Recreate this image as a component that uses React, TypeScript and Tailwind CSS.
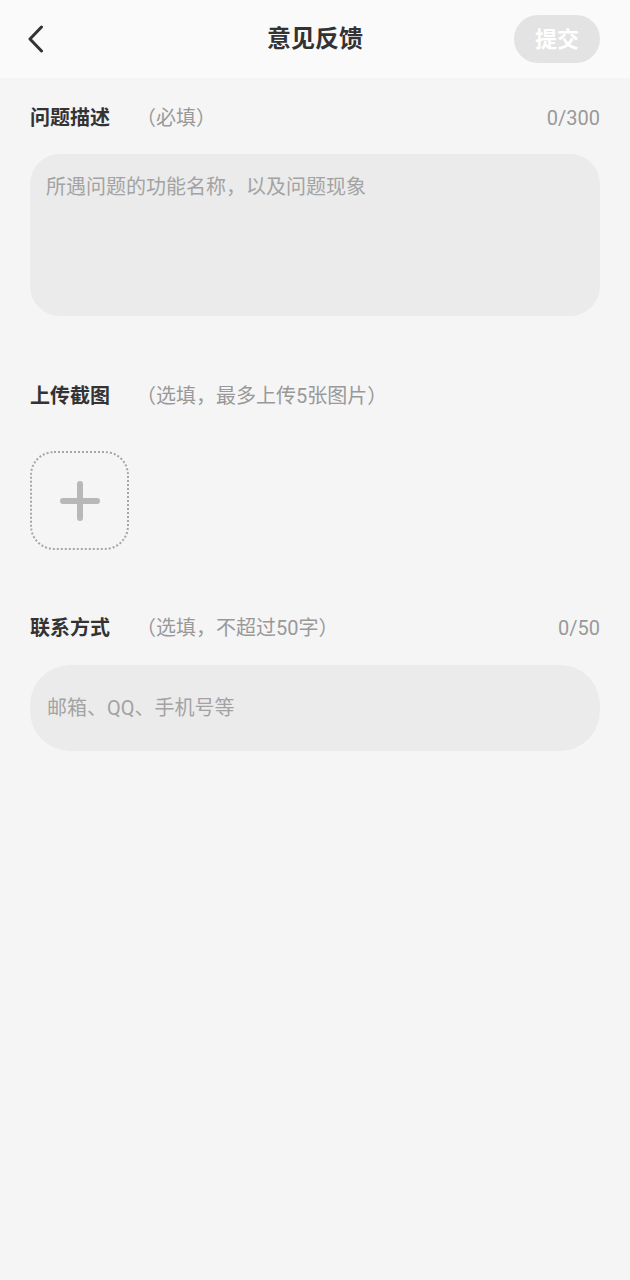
import * as React from "react";

const font = "font-['Roboto','Noto_Sans_CJK_SC',sans-serif]";

export default function App() {
  const [desc, setDesc] = React.useState("");
  const [contact, setContact] = React.useState("");

  return (
    <main className={`min-h-[1280px] bg-[#f5f5f5] ${font}`}>
      <header className="grid h-[78px] grid-cols-[1fr_auto_1fr] items-center bg-[#fafafa] px-[28px]">
        <button type="button" className="flex h-[48px] w-[40px] items-center justify-start">
          <svg width="15" height="28" viewBox="0 0 15 28" fill="none">
            <path d="M13.5 2L2 14L13.5 26" stroke="#333" strokeWidth="3" strokeLinecap="round" strokeLinejoin="round" />
          </svg>
        </button>
        <h1 className="text-[24px] font-bold leading-none text-[#333]">意见反馈</h1>
        <div className="flex justify-end">
          <button
            type="button"
            disabled={!desc}
            className="mr-[2px] h-[48px] w-[86px] rounded-full bg-[#e3e3e3] text-[22px] font-bold text-white"
          >
            提交
          </button>
        </div>
      </header>

      <section className="px-[30px]">
        <FieldLabel title="问题描述" hint="（必填）" count={`${desc.length}/300`} className="mt-[26px]" />
        <textarea
          value={desc}
          maxLength={300}
          onChange={(e) => setDesc(e.target.value)}
          placeholder="所遇问题的功能名称，以及问题现象"
          className="mt-[22px] block h-[162px] w-full resize-none rounded-[30px] bg-[#ebebeb] px-[16px] pt-[19px] text-[20px] leading-[28px] text-[#333] outline-none placeholder:text-[#a3a3a3]"
        />

        <FieldLabel title="上传截图" hint="（选填，最多上传5张图片）" className="mt-[66px]" />
        <button
          type="button"
          className="mt-[41px] flex h-[99px] w-[99px] items-center justify-center rounded-[24px] border-2 border-dotted border-[#a6a6a6]"
        >
          <svg width="40" height="40" viewBox="0 0 40 40">
            <path d="M20 3V37M3 20H37" stroke="#b8b8b8" strokeWidth="6" strokeLinecap="round" />
          </svg>
        </button>

        <FieldLabel title="联系方式" hint="（选填，不超过50字）" count={`${contact.length}/50`} className="mt-[64px]" />
        <input
          value={contact}
          maxLength={50}
          onChange={(e) => setContact(e.target.value)}
          placeholder="邮箱、QQ、手机号等"
          className="mt-[23px] block h-[86px] w-full rounded-[40px] bg-[#ebebeb] px-[17px] text-[20px] text-[#333] outline-none placeholder:text-[#a3a3a3]"
        />
      </section>
    </main>
  );
}

function FieldLabel({ title, hint, count, className }: { title: string; hint: string; count?: string; className?: string }) {
  return (
    <div className={`flex h-[28px] items-center justify-between ${className ?? ""}`}>
      <p className="text-[20px] leading-[28px]">
        <span className="font-bold text-[#333]">{title}</span>
        <span className="ml-[26px] text-[#999]">{hint}</span>
      </p>
      {count ? <span className="text-[20px] leading-[28px] text-[#999]">{count}</span> : null}
    </div>
  );
}
